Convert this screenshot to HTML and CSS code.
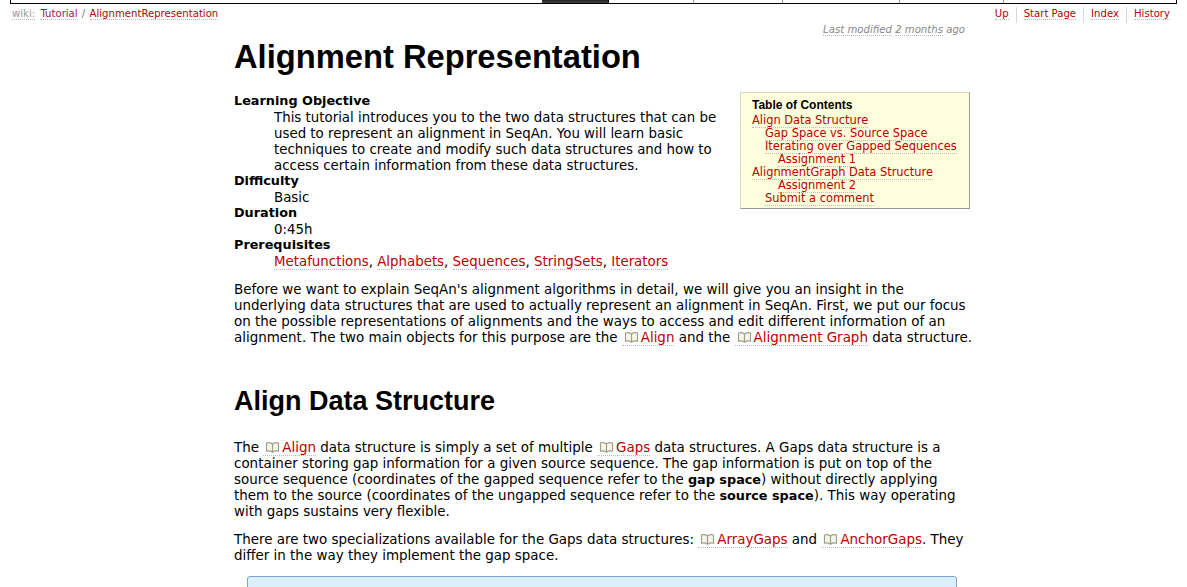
FILE: index.html
```html
<!DOCTYPE html>
<html lang="en">
<head>
<meta charset="utf-8">
<title>Alignment Representation</title>
<link rel="stylesheet" href="styles.css">
</head>
<body>
<svg class="defs" width="0" height="0" aria-hidden="true"><symbol id="book" viewBox="0 0 15 11"><path d="M7.500 2C6 .9 3.500.5 1.500 1V9.200C3.500 8.700 6 9.100 7.500 10.200 9 9.100 11.500 8.700 13.500 9.200V1C11.500.5 9 .9 7.500 2ZM7.500 2V10.200" fill="#f5f5ea" stroke="#a0a08a" stroke-width="1.200"/></symbol></svg>
<nav class="mainnav">
  <span class="tab t1"></span><span class="tab t2"></span><span class="tab t3"></span><span class="tab t4"></span><span class="tab t5"></span><span class="tab t6"></span><span class="tab t7"></span>
</nav>
<div class="ctxbar">
  <div class="crumbs"><a class="wikilabel" href="#">wiki:</a> <a class="tut" href="#">Tutorial</a> <span class="sep">/</span> <a href="#">AlignmentRepresentation</a></div>
  <ul class="ctxnav"><li><a href="#">Up</a></li><li><a href="#">Start Page</a></li><li><a href="#">Index</a></li><li><a href="#">History</a></li></ul>
</div>
<main class="content">
  <p class="lastmod"><a href="#">Last modified</a> <a href="#">2 months</a> ago</p>
  <h1>Alignment Representation</h1>
  <aside class="toc">
    <h4>Table of Contents</h4>
    <ol>
      <li><a href="#">Align Data Structure</a></li>
      <li class="l2"><a href="#">Gap Space vs. Source Space</a></li>
      <li class="l2"><a href="#">Iterating over Gapped Sequences</a></li>
      <li class="l3"><a href="#">Assignment 1</a></li>
      <li><a href="#">AlignmentGraph Data Structure</a></li>
      <li class="l3"><a href="#">Assignment 2</a></li>
      <li class="l2"><a href="#">Submit a comment</a></li>
    </ol>
  </aside>
  <dl class="meta">
    <dt>Learning Objective</dt>
    <dd>This tutorial introduces you to the two data structures that can be used to represent an alignment in SeqAn. You will learn basic techniques to create and modify such data structures and how to access certain information from these data structures.</dd>
    <dt>Difficulty</dt>
    <dd>Basic</dd>
    <dt>Duration</dt>
    <dd>0:45h</dd>
    <dt>Prerequisites</dt>
    <dd><a href="#">Metafunctions</a>, <a href="#">Alphabets</a>, <a href="#">Sequences</a>, <a href="#">StringSets</a>, <a href="#">Iterators</a></dd>
  </dl>
  <p>Before we want to explain SeqAn's alignment algorithms in detail, we will give you an insight in the underlying data structures that are used to actually represent an alignment in SeqAn. First, we put our focus on the possible representations of alignments and the ways to access and edit different information of an alignment. The two main objects for this purpose are the <a class="doc" href="#"><svg class="book"><use href="#book"/></svg>Align</a> and the <a class="doc" href="#"><svg class="book"><use href="#book"/></svg>Alignment Graph</a> data structure.</p>
  <h2>Align Data Structure</h2>
  <p>The <a class="doc" href="#"><svg class="book"><use href="#book"/></svg>Align</a> data structure is simply a set of multiple <a class="doc" href="#"><svg class="book"><use href="#book"/></svg>Gaps</a> data structures. A Gaps data structure is a container storing gap information for a given source sequence. The gap information is put on top of the source sequence (coordinates of the gapped sequence refer to the <strong>gap space</strong>) without directly applying them to the source (coordinates of the ungapped sequence refer to the <strong>source space</strong>). This way operating with gaps sustains very flexible.</p>
  <p>There are two specializations available for the Gaps data structures: <a class="doc" href="#"><svg class="book"><use href="#book"/></svg>ArrayGaps</a> and <a class="doc" href="#"><svg class="book"><use href="#book"/></svg>AnchorGaps</a>. They differ in the way they implement the gap space.</p>
  <div class="note"></div>
</main>
</body>
</html>
```
FILE: styles.css
```css
html, body { margin: 0; padding: 0; background: #fff; }
body { height: 587px; overflow: hidden; color: #000; font: 13.36px/16px "DejaVu Sans", Verdana, sans-serif; }
.defs { position: absolute; }
a { color: #b00; text-decoration: none; border-bottom: 1px dotted #bbb; }

.mainnav { display: flex; height: 3px; margin: 0 10px 0 10px; border: 1px solid #000; border-top: 0; border-bottom-width: 1px; }
.tab { display: block; border-right: 1px solid #999; }
.t1 { width: 531px; border-right: 0; }
.t2 { width: 66px; background: linear-gradient(#222, #444); border-right: 1px solid #000; }
.t3 { width: 84px; }
.t4 { width: 88px; }
.t5 { width: 116px; }
.t6 { width: 103px; }
.t7 { flex: 1; border-right: 0; }

.ctxbar { display: flex; justify-content: space-between; height: 16px; padding: 3px 17px 0 12px; font-size: 10.15px; line-height: 14px; }
.wikilabel { color: #999; margin-right: 2px; }
.tut { color: #a0105a; }
.sep { color: #777; margin: 0 1px; }
.ctxnav { display: flex; list-style: none; margin: 0; padding: 0; }
.ctxnav li { padding: 0 7px; border-left: 1px solid #d7d7d7; }
.ctxnav li:first-child { border-left: 0; }
.ctxnav li:last-child { padding-right: 0; }

.content { width: 736px; margin-left: 234px; }
.lastmod { margin: 0; padding-right: 5px; text-align: right; font-size: 10.15px; line-height: 14px; font-style: italic; color: #888; }
.lastmod a { color: #888; }
h1, h2, h4 { font-family: Arial, "Liberation Sans", sans-serif; font-weight: bold; }
h1 { margin: 0 0 16px; font-size: 32.7px; line-height: 40px; }
h2 { margin: 39px 0 23px; font-size: 27px; line-height: 32px; }
p { margin: 0 -3px 12px 0; font-size: 13.44px; }
p.lastmod { margin: 0; font-size: 10.15px; }
strong { font-weight: bold; font-size: 12.8px; }

.toc { float: right; box-sizing: border-box; width: 230px; height: 117px; margin: -1px 0 0 20px; padding: 6px 11px; background: #ffd; border: 1px solid #d7d7d7; border-color: #d7d7c0 #999 #999 #d7d7c0; font-size: 11.42px; line-height: 13px; }
.toc h4 { margin: 0 0 2px; font-size: 12px; line-height: 13px; }
.toc ol { list-style: none; margin: 0; padding: 0; }
.l2 { padding-left: 13px; }
.l3 { padding-left: 26px; }

.meta { margin: 0 0 13px; }
.meta dt { font-weight: bold; font-size: 12.8px; }
.meta dd { margin: 0 0 -1px 40px; padding-top: 1px; }

.book { display: inline-block; width: 15px; height: 11px; margin: 0 2px; vertical-align: -1px; }
.note { box-sizing: border-box; height: 40px; margin: 12px 13px 0; background: #dcf0fb; border: 1px solid #7aa5d0; border-radius: 3px; }
```
